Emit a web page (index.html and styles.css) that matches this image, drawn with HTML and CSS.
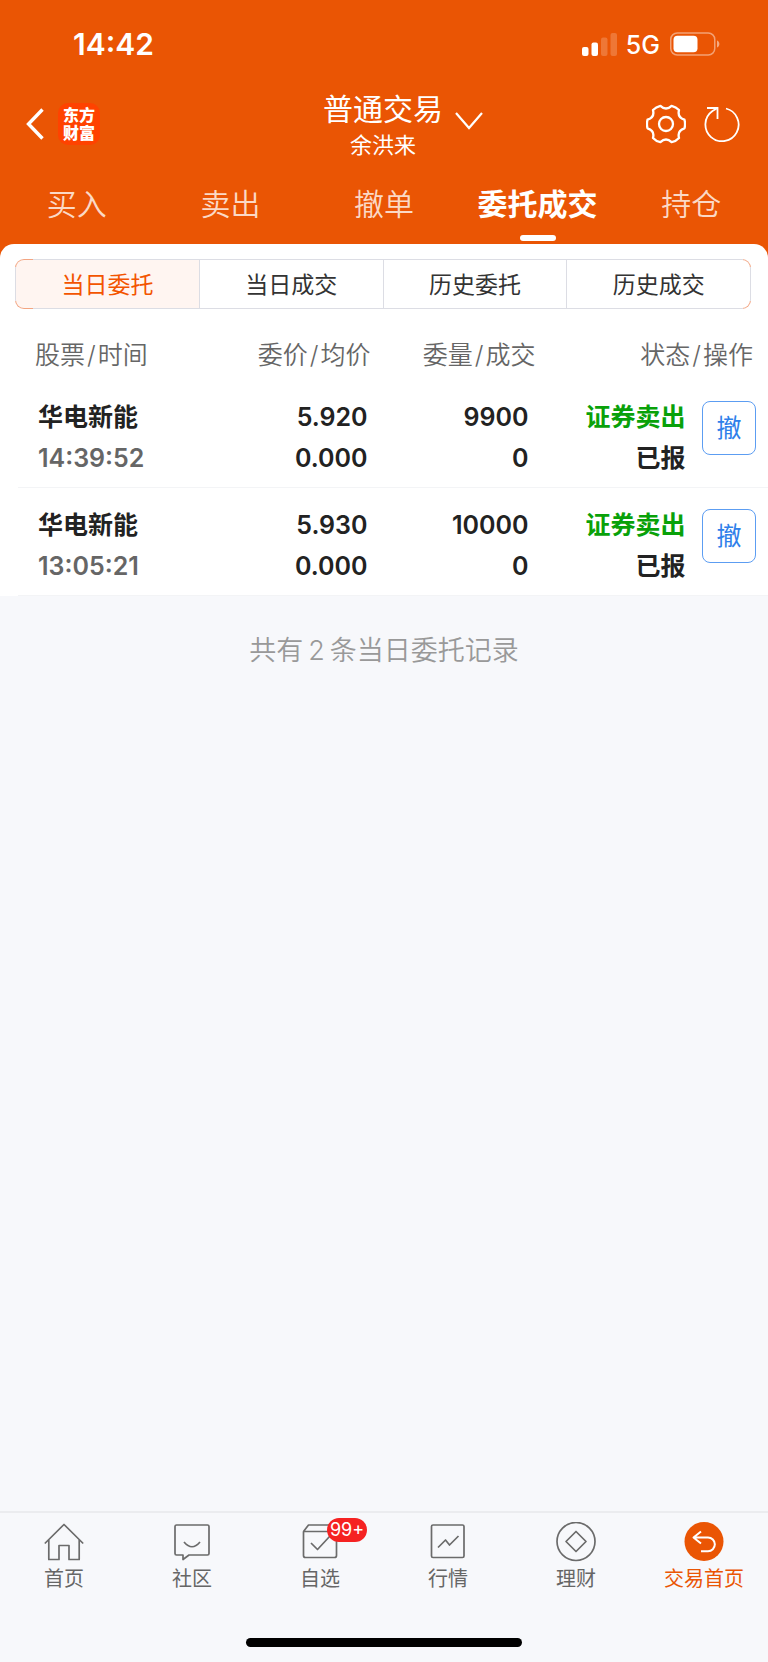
FILE: index.html
```html
<!DOCTYPE html>
<html lang="zh-CN">
<head>
<meta charset="utf-8">
<meta name="viewport" content="width=device-width, initial-scale=1">
<title>普通交易</title>
<link rel="stylesheet" href="styles.css">
</head>
<body>
<div class="app">
  <header class="top">
    <div class="status">
      <span class="clock">14:42</span>
      <div class="status-right">
        <svg class="signal" viewBox="0 0 36 24" aria-hidden="true">
          <rect x="0" y="15" width="6.500" height="9" rx="2"/>
          <rect x="9.500" y="10.500" width="6.500" height="13.500" rx="2"/>
          <rect x="19" y="5.500" width="6.500" height="18.500" rx="2" opacity=".2"/>
          <rect x="28.500" y="1" width="6.500" height="23" rx="2" opacity=".2"/>
        </svg>
        <span class="network">5G</span>
        <svg class="battery" viewBox="0 0 50 24" aria-hidden="true">
          <rect x=".75" y="1" width="44" height="22" rx="6.500" fill="none" stroke="#fff" stroke-width="1.500" opacity=".45"/>
          <rect x="3.500" y="3.750" width="24" height="16.500" rx="4" fill="#fff"/>
          <path d="M47 8.500c3.200 1.200 3.200 5.800 0 7z" fill="#fff" opacity=".5"/>
        </svg>
      </div>
    </div>

    <div class="titlebar">
      <div class="side">
        <button class="icon-btn" type="button" aria-label="返回">
          <svg class="back" viewBox="0 0 18 32"><path d="M16.500 1.500 2.500 16 16.500 30.500" fill="none" stroke="#fff" stroke-width="3.400"/></svg>
        </button>
        <a class="logo" href="#"><span>东方</span><span>财富</span></a>
      </div>
      <button class="account" type="button">
        <span class="account-text">
          <span class="account-title">普通交易</span>
          <span class="account-name">余洪来</span>
        </span>
        <svg class="chevron" viewBox="0 0 28 18" aria-hidden="true"><path d="M1 1 14 16 27 1" fill="none" stroke="#fff" stroke-width="2.200"/></svg>
      </button>
      <div class="side side-right">
        <button class="icon-btn" type="button" aria-label="设置">
          <svg class="gear" viewBox="0 0 40 40"><g fill="none" stroke="#fff" stroke-width="2.300" stroke-linejoin="round"><path d="M38.500 24.300Q31.100 26.400 33 33.900Q30 37.200 25.600 38.200Q20 32.800 14.400 38.200Q10 37.200 7 33.900Q8.900 26.400 1.500 24.300Q.4 20 1.500 15.700Q8.900 13.600 7 6.100Q10 2.800 14.400 1.800Q20 7.200 25.600 1.800Q30 2.800 33 6.100Q31.100 13.600 38.500 15.700Q39.600 20 38.500 24.300Z"/><circle cx="20" cy="20" r="7"/></g></svg>
        </button>
        <button class="icon-btn" type="button" aria-label="刷新">
          <svg class="refresh" viewBox="0 0 36 36"><g fill="none" stroke="#fff" stroke-width="1.800"><path d="M22 2.500A16.600 16.600 0 1 1 8.500 5L13.500 2"/><path d="M3 2H13.500V13"/></g></svg>
        </button>
      </div>
    </div>

    <nav class="tabs" aria-label="交易">
      <a href="#">买入</a>
      <a href="#">卖出</a>
      <a href="#">撤单</a>
      <a href="#" class="active" aria-current="page">委托成交</a>
      <a href="#">持仓</a>
    </nav>
  </header>

  <main class="main">
    <section class="sheet">
      <div class="segments">
        <button class="segment selected" type="button">当日委托</button>
        <button class="segment" type="button">当日成交</button>
        <button class="segment" type="button">历史委托</button>
        <button class="segment" type="button">历史成交</button>
      </div>
      <table class="orders">
        <colgroup><col class="c-name"><col class="c-price"><col class="c-qty"><col class="c-state"><col class="c-op"></colgroup>
        <thead>
          <tr><th>股票<i>/</i>时间</th><th>委价<i>/</i>均价</th><th>委量<i>/</i>成交</th><th colspan="2">状态<i>/</i>操作</th></tr>
        </thead>
        <tbody>
          <tr>
            <td><div>华电新能</div><div class="time">14:39:52</div></td>
            <td><div>5.920</div><div>0.000</div></td>
            <td><div>9900</div><div>0</div></td>
            <td><div class="sell">证券卖出</div><div>已报</div></td>
            <td><button class="cancel" type="button">撤</button></td>
          </tr>
          <tr>
            <td><div>华电新能</div><div class="time">13:05:21</div></td>
            <td><div>5.930</div><div>0.000</div></td>
            <td><div>10000</div><div>0</div></td>
            <td><div class="sell">证券卖出</div><div>已报</div></td>
            <td><button class="cancel" type="button">撤</button></td>
          </tr>
        </tbody>
      </table>
    </section>
    <p class="summary">共有<span class="count">2</span>条当日委托记录</p>
  </main>

  <footer class="bottom">
    <nav class="dock" aria-label="主导航">
      <a href="#"><svg viewBox="0 0 40 40"><path d="M.8 21.500 20 2.500 39.200 21.500M4.800 18V37.500H15V23.500H25V37.500H35.200V18"/></svg><span>首页</span></a>
      <a href="#"><svg viewBox="0 0 40 40"><path d="M4.500 3H35.500Q37 3 37 4.500V31.500Q37 33 35.500 33H17L11 37.500V33H4.500Q3 33 3 31.500V4.500Q3 3 4.500 3Z"/><path d="M12 20Q20 29.500 28 20"/></svg><span>社区</span></a>
      <a href="#"><svg viewBox="0 0 40 40"><path d="M3.500 9.500V33.500Q3.500 35.500 5.500 35.500H34.500Q36.500 35.500 36.500 33.500V9.500ZM3.500 9.500 8.500 3H31.500L36.500 9.500M11 21 17.500 27.500 30 14"/></svg><span>自选</span><b class="badge">99+</b></a>
      <a href="#"><svg viewBox="0 0 40 40"><rect x="3.500" y="3" width="32.500" height="32.500" rx="1.500"/><path d="M10 25.500 17.500 18 21.500 23 30.500 14"/></svg><span>行情</span></a>
      <a href="#"><svg viewBox="0 0 40 40"><circle cx="20" cy="19.500" r="19"/><path d="M20 9.500 30 19.500 20 29.500 10 19.500Z"/></svg><span>理财</span></a>
      <a href="#" class="current" aria-current="page"><svg viewBox="0 0 40 40"><circle class="disc" cx="20" cy="19.500" r="19.500"/><path class="arrow" d="M17 9.500 9.500 15.500 17 21.500M9.500 15.500H24A6.800 6.800 0 0 1 24 29.200H17"/></svg><span>交易首页</span></a>
    </nav>
    <div class="home-bar"></div>
  </footer>
</div>
</body>
</html>
```

FILE: styles.css
```css
:root {
  --brand: #ea5504;
  --ink: #222;
  --muted: #666;
  --page: #f7f8fb;
}

* { box-sizing: border-box; }

body {
  margin: 0;
  background: var(--page);
  color: var(--ink);
  font-family: Inter, "Noto Sans CJK SC", sans-serif;
}

a { color: inherit; text-decoration: none; }

button {
  margin: 0;
  padding: 0;
  border: 0;
  background: none;
  color: inherit;
  font: inherit;
}

svg { display: block; }

.app {
  display: flex;
  flex-direction: column;
  min-height: 100vh;
}

/* Header */
.top {
  padding-bottom: 16px;
  background: var(--brand);
  color: #fff;
}

.status {
  display: flex;
  align-items: center;
  justify-content: space-between;
  height: 88px;
  padding: 0 48px 0 73px;
}

.clock { font-size: 30px; font-weight: 600; }

.status-right { display: flex; align-items: center; }
.signal { width: 36px; height: 24px; margin-right: 8px; fill: #fff; }
.network { margin-right: 10px; padding-top: 1px; font-size: 25px; font-weight: 500; line-height: 28px; }
.battery { width: 50px; height: 24px; }

.titlebar {
  display: grid;
  grid-template-rows: 72px;
  grid-template-columns: 1fr auto 1fr;
  align-items: center;
  padding: 0 28px 0 26px;
}

.side { display: flex; align-items: center; gap: 14px; }
.side-right { justify-content: flex-end; gap: 18px; }
.back { width: 18px; height: 32px; }
.gear { width: 40px; height: 40px; }
.refresh { width: 36px; height: 36px; }

.logo {
  display: flex;
  flex-direction: column;
  align-items: center;
  justify-content: center;
  width: 42px;
  height: 42px;
  border-radius: 10px;
  background: #ff4200;
  font-size: 16px;
  font-weight: 900;
  line-height: 18px;
}

.account { display: flex; align-items: center; gap: 12px; padding-left: 40px; }
.account-text { display: flex; flex-direction: column; align-items: center; padding-top: 4px; }
.account-title { font-size: 30px; line-height: 38px; }
.account-name { font-size: 22px; line-height: 34px; }
.chevron { width: 28px; height: 18px; margin-bottom: 6px; }

.tabs {
  display: grid;
  grid-template-rows: 84px;
  grid-template-columns: repeat(5, 1fr);
}

.tabs a {
  position: relative;
  color: #fbd9c6;
  font-size: 30px;
  font-weight: 350;
  line-height: 88px;
  text-align: center;
}

.tabs .active { color: #fff; font-weight: 700; }

.tabs .active::after {
  content: "";
  position: absolute;
  bottom: 3px;
  left: 50%;
  width: 36px;
  height: 6px;
  margin-left: -18px;
  border-radius: 3px;
  background: #fff;
}

/* Order list */
.main { flex: 1; }

.sheet {
  position: relative;
  margin-top: -16px;
  padding-top: 15px;
  border-radius: 14px 14px 0 0;
  background: #fff;
}

.segments {
  display: grid;
  grid-template-columns: repeat(4, 1fr);
  gap: 1px;
  height: 50px;
  margin: 0 17px 0 15px;
  padding: 1px;
  border-radius: 9px;
  background:
    linear-gradient(#f3a582, #f3a582) left top / 18px 8px no-repeat,
    linear-gradient(#f3a582, #f3a582) left bottom / 18px 8px no-repeat,
    linear-gradient(#f3a582, #f3a582) right top / 8px 8px no-repeat,
    linear-gradient(#f3a582, #f3a582) right bottom / 8px 8px no-repeat,
    #dcdde4;
}

.segment {
  padding-bottom: 2px;
  background: #fff;
  color: #333;
  font-size: 23px;
}

.segment:first-child { border-radius: 8px 0 0 8px; }
.segment:last-child { border-radius: 0 8px 8px 0; }
.segment.selected { background: #fff5f1; color: #f35400; }

.orders {
  width: calc(100% - 18px);
  margin-left: 18px;
  border-spacing: 0;
  table-layout: fixed;
  text-align: right;
}

.c-name { width: 27%; }
.c-price { width: 20%; }
.c-qty { width: 22%; }
.c-state { width: 20%; }
.c-op { width: 11%; }

.orders th {
  height: 71px;
  padding: 28px 0 0 17px;
  color: var(--muted);
  font-size: 25px;
  font-weight: 350;
  line-height: 36px;
  vertical-align: top;
  white-space: nowrap;
}

.orders th i { margin: 0 2px; font-style: normal; }
.orders th:last-child { padding-right: 15px; }

.orders td {
  height: 108px;
  padding: 17px 0 8px;
  border-bottom: 1px solid #f3f4f6;
  font-size: 25px;
  font-weight: 600;
  line-height: 41px;
  vertical-align: top;
  white-space: nowrap;
}

.orders th:first-child,
.orders td:first-child { text-align: left; }
.orders td:first-child { padding-left: 20px; }
.orders td:nth-child(2) { padding-right: 3px; }
.orders td:nth-child(3) { padding-right: 7px; }
.orders td:nth-child(5) { padding: 21px 12px 0 0; }

.orders .time { color: var(--muted); }
.orders .sell { color: #09a109; }

.cancel {
  display: block;
  width: 54px;
  height: 54px;
  margin-left: auto;
  border: 1px solid #5c9df2;
  border-radius: 8px;
  color: #2f80ea;
  font-size: 25px;
  font-weight: 400;
  line-height: 52px;
}

.summary {
  margin: 35px 0;
  color: #999;
  font-size: 27px;
  font-weight: 350;
  line-height: 40px;
  text-align: center;
}

.count { margin: 0 5px; }

/* Bottom navigation */
.bottom {
  border-top: 2px solid #ebecef;
}

.dock {
  display: grid;
  grid-template-columns: repeat(6, 1fr);
  height: 125px;
  padding-top: 9px;
}

.dock a {
  position: relative;
  display: flex;
  flex-direction: column;
  align-items: center;
  color: var(--muted);
  font-size: 20px;
  line-height: 34px;
}

.dock svg {
  width: 40px;
  height: 40px;
  fill: none;
  stroke: #6b6b6b;
  stroke-width: 1.7;
  stroke-linejoin: round;
}

.dock .current { color: var(--brand); }
.dock .disc { fill: var(--brand); stroke: none; }
.dock .arrow { stroke: #fff; stroke-width: 2; }

.badge {
  position: absolute;
  top: -4px;
  left: 50%;
  width: 40px;
  height: 24px;
  margin-left: 7px;
  border-radius: 12px;
  background: #f52222;
  color: #fff;
  font-size: 18px;
  font-weight: 400;
  line-height: 24px;
  text-align: center;
}

.home-bar {
  width: 36%;
  height: 9px;
  margin: 0 auto 15px;
  border-radius: 5px;
  background: #000;
}
```
